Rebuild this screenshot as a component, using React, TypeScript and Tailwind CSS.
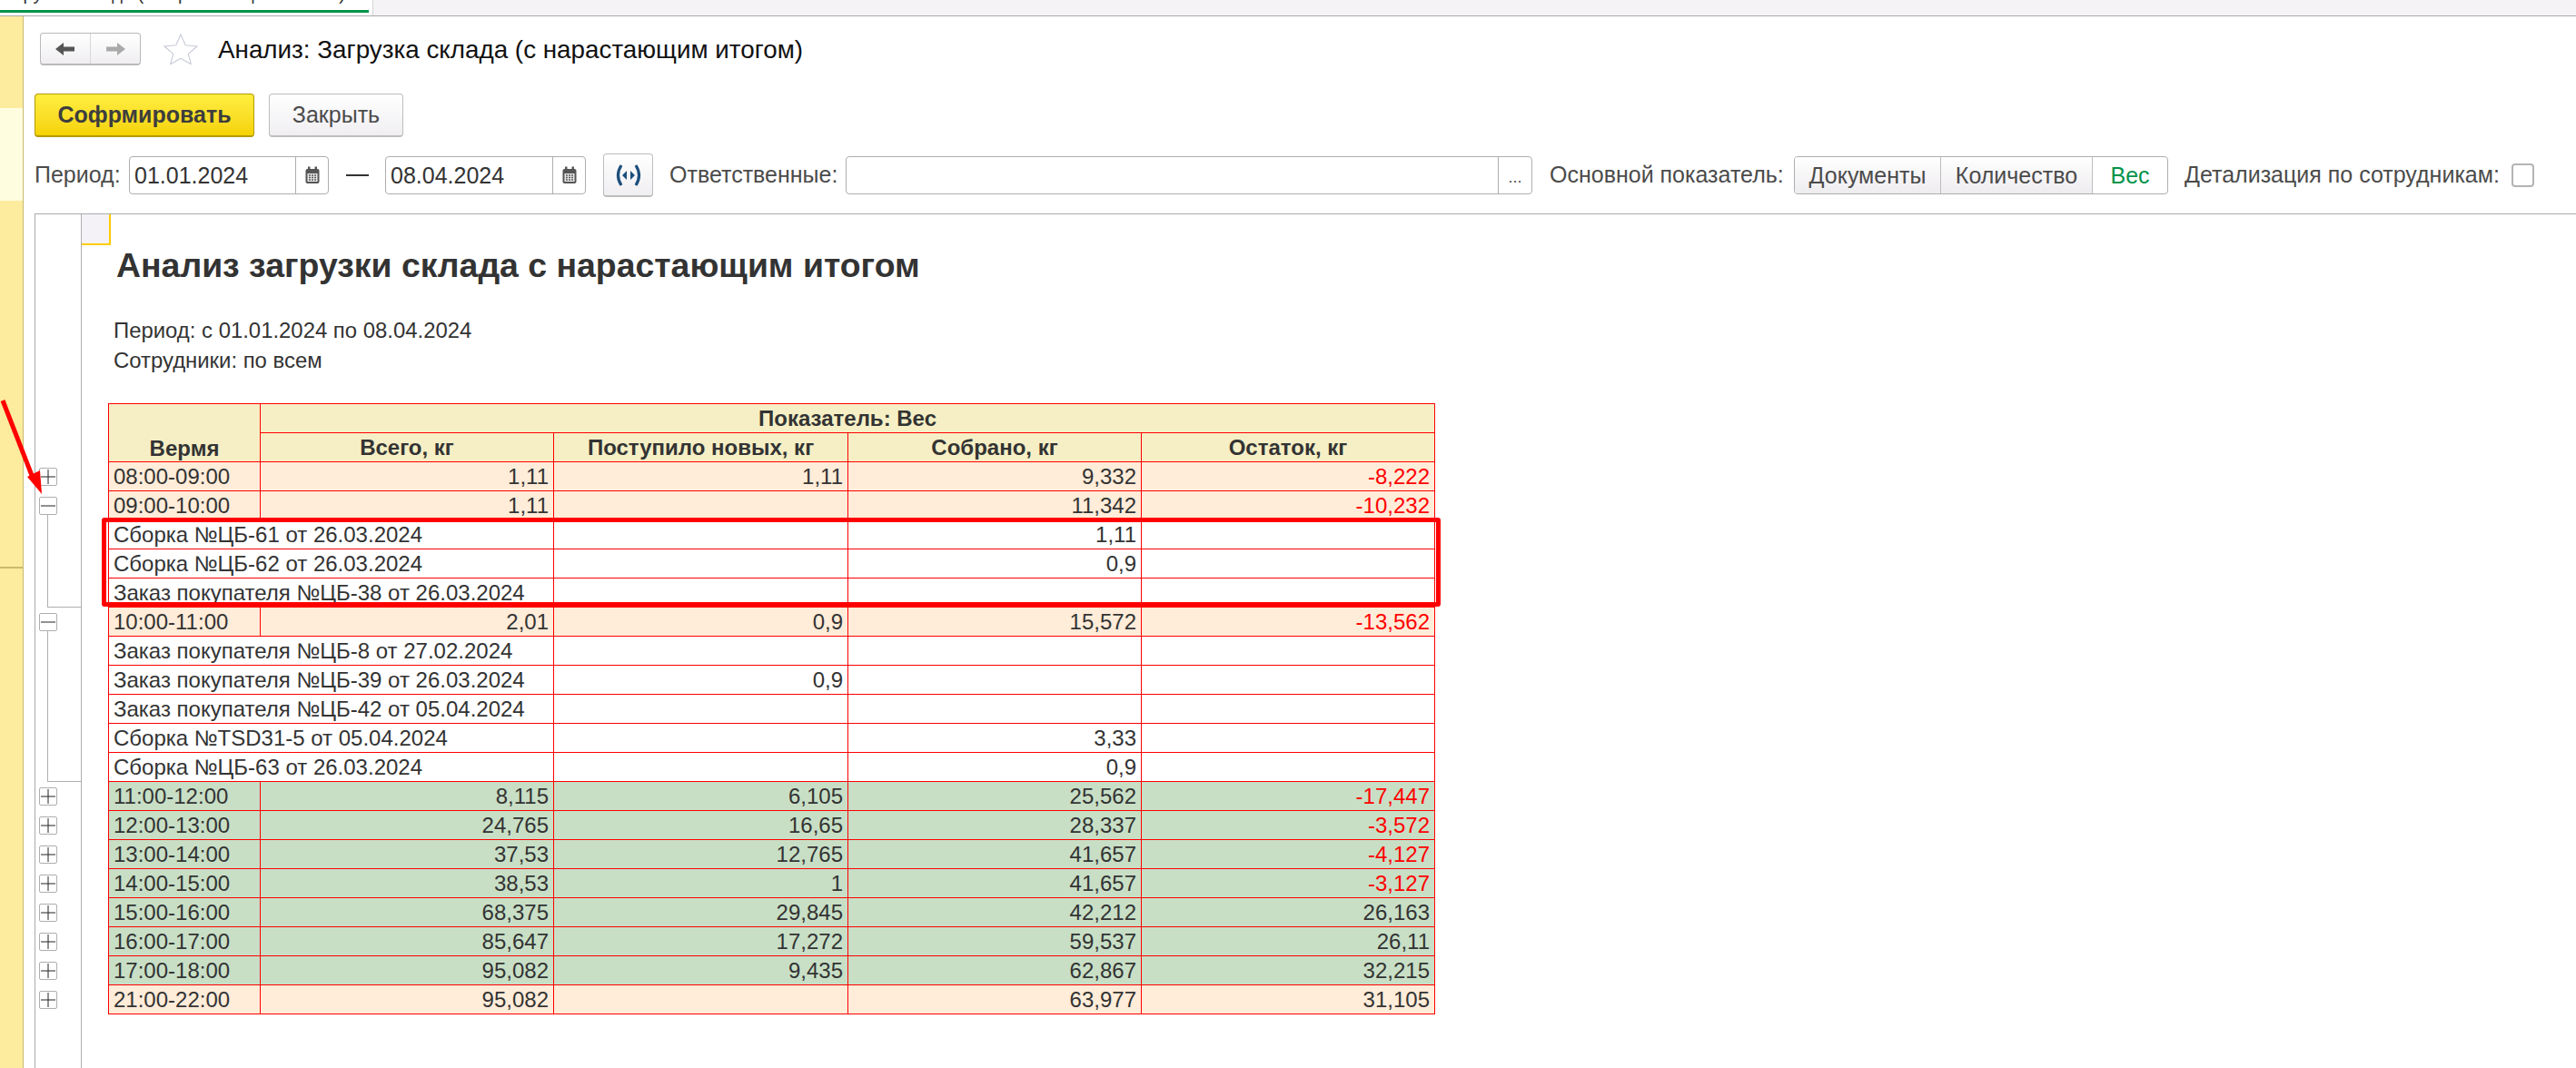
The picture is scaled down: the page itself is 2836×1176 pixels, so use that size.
const font = { fontFamily: '"Liberation Sans", Arial, sans-serif' };

type Row = {
  kind: 'peach' | 'green' | 'detail';
  label: string;
  total?: string;
  added?: string;
  done?: string;
  rest?: string;
};

const rows: Row[] = [
  { kind: 'peach', label: '08:00-09:00', total: '1,11', added: '1,11', done: '9,332', rest: '-8,222' },
  { kind: 'peach', label: '09:00-10:00', total: '1,11', done: '11,342', rest: '-10,232' },
  { kind: 'detail', label: 'Сборка №ЦБ-61 от 26.03.2024', done: '1,11' },
  { kind: 'detail', label: 'Сборка №ЦБ-62 от 26.03.2024', done: '0,9' },
  { kind: 'detail', label: 'Заказ покупателя №ЦБ-38 от 26.03.2024' },
  { kind: 'peach', label: '10:00-11:00', total: '2,01', added: '0,9', done: '15,572', rest: '-13,562' },
  { kind: 'detail', label: 'Заказ покупателя №ЦБ-8 от 27.02.2024' },
  { kind: 'detail', label: 'Заказ покупателя №ЦБ-39 от 26.03.2024', added: '0,9' },
  { kind: 'detail', label: 'Заказ покупателя №ЦБ-42 от 05.04.2024' },
  { kind: 'detail', label: 'Сборка №TSD31-5 от 05.04.2024', done: '3,33' },
  { kind: 'detail', label: 'Сборка №ЦБ-63 от 26.03.2024', done: '0,9' },
  { kind: 'green', label: '11:00-12:00', total: '8,115', added: '6,105', done: '25,562', rest: '-17,447' },
  { kind: 'green', label: '12:00-13:00', total: '24,765', added: '16,65', done: '28,337', rest: '-3,572' },
  { kind: 'green', label: '13:00-14:00', total: '37,53', added: '12,765', done: '41,657', rest: '-4,127' },
  { kind: 'green', label: '14:00-15:00', total: '38,53', added: '1', done: '41,657', rest: '-3,127' },
  { kind: 'green', label: '15:00-16:00', total: '68,375', added: '29,845', done: '42,212', rest: '26,163' },
  { kind: 'green', label: '16:00-17:00', total: '85,647', added: '17,272', done: '59,537', rest: '26,11' },
  { kind: 'green', label: '17:00-18:00', total: '95,082', added: '9,435', done: '62,867', rest: '32,215' },
  { kind: 'peach', label: '21:00-22:00', total: '95,082', done: '63,977', rest: '31,105' },
];

function CalendarIcon() {
  return (
    <svg width="18" height="20" viewBox="0 0 18 20" className="shrink-0">
      <rect x="1.5" y="3" width="15" height="16" rx="2" fill="#555" />
      <rect x="4" y="0.5" width="2.5" height="4" fill="#555" />
      <rect x="11.5" y="0.5" width="2.5" height="4" fill="#555" />
      <rect x="3.5" y="8" width="11" height="9" fill="#e8e8e8" />
      <path d="M5 10h2M8 10h2M11 10h2M5 12.5h2M8 12.5h2M11 12.5h2M5 15h2M8 15h2M11 15h2" stroke="#555" strokeWidth="1.4" />
    </svg>
  );
}

function DateField({ value, width }: { value: string; width: string }) {
  return (
    <div className={`flex h-[42px] ${width} items-stretch rounded-[4px] border border-[#aeaeae] bg-white`}>
      <div className="flex-1 pl-[5px] text-[25px] leading-[40px] text-[#333]">{value}</div>
      <div className="flex w-[36px] items-center justify-center border-l border-[#aeaeae]">
        <CalendarIcon />
      </div>
    </div>
  );
}

function OutlineBox({ open }: { open?: boolean }) {
  return (
    <div className="h-[32px] pl-[4px] pt-[7px]">
      <div className="flex h-[20px] w-[20px] items-center justify-center rounded-[2px] border border-[#aeaeae] bg-white">
        <svg width="18" height="18" viewBox="0 0 18 18">
          <path d="M1 9h16" stroke="#222" strokeWidth="1" />
          {!open && <path d="M9 1v16" stroke="#222" strokeWidth="1" />}
        </svg>
      </div>
    </div>
  );
}

function OutlineBracket({ rows }: { rows: number }) {
  return (
    <div className="flex items-start" style={{ height: rows * 32 }}>
      <div
        className="ml-[13px] -mt-[6px] w-[37px] border-b border-l border-[#aeaeae]"
        style={{ height: rows * 32 + 7 }}
      />
    </div>
  );
}

function ReportTable() {
  const cell = 'border border-[#ff0000] p-0 px-[5px] h-[32px] leading-[28px] overflow-hidden whitespace-nowrap';
  return (
    <div className="relative ml-[29px] mt-[31px] w-[1460px]">
      <table className="w-[1460px] table-fixed border-collapse text-[24px] text-[#333]">
        <colgroup>
          <col className="w-[167px]" />
          <col className="w-[323px]" />
          <col className="w-[324px]" />
          <col className="w-[323px]" />
          <col className="w-[323px]" />
        </colgroup>
        <thead className="bg-[#f6efc5] font-bold">
          <tr>
            <th rowSpan={2} className={`${cell} align-bottom text-center`}>
              Вермя
            </th>
            <th colSpan={4} className={`${cell} text-center`}>
              Показатель: Вес
            </th>
          </tr>
          <tr>
            <th className={`${cell} text-center`}>Всего, кг</th>
            <th className={`${cell} text-center`}>Поступило новых, кг</th>
            <th className={`${cell} text-center`}>Собрано, кг</th>
            <th className={`${cell} text-center`}>Остаток, кг</th>
          </tr>
        </thead>
        <tbody>
          {rows.map((r) => {
            const bg = r.kind === 'peach' ? 'bg-[#ffecd9]' : r.kind === 'green' ? 'bg-[#c8dfc6]' : 'bg-white';
            const negative = r.rest?.startsWith('-');
            return (
              <tr key={r.label} className={bg}>
                {r.kind === 'detail' ? (
                  <td colSpan={2} className={cell}>
                    {r.label}
                  </td>
                ) : (
                  <>
                    <td className={cell}>{r.label}</td>
                    <td className={`${cell} text-right`}>{r.total}</td>
                  </>
                )}
                <td className={`${cell} text-right`}>{r.added}</td>
                <td className={`${cell} text-right`}>{r.done}</td>
                <td className={`${cell} text-right ${negative ? 'text-[#ff0000]' : ''}`}>{r.rest}</td>
              </tr>
            );
          })}
        </tbody>
      </table>
      {/* highlight drawn on top of the screenshot */}
      <div className="absolute left-[-7px] top-[126px] h-[98px] w-[1474px] rounded-[3px] border-[5px] border-[#ff0000]" />
    </div>
  );
}

export default function App() {
  return (
    <div className="relative flex h-[1176px] w-[2836px] flex-col overflow-hidden bg-white" style={font}>
      {/* Tab bar */}
      <div className="flex h-[18px] shrink-0 border-b border-[#aaaaaa] bg-[#f5f3f6]">
        <div className="h-[17px] w-[411px] border-r border-[#d4d4d4] bg-white">
          <div className="h-[11px] overflow-hidden">
            <div className="-mt-[17px] -ml-[5px] whitespace-nowrap text-[20px] leading-[20px] text-[#333]">
              Загрузка склада (с нарастающим итогом)
            </div>
          </div>
          <div className="h-[3px] w-[406px] bg-[#00934a]" />
        </div>
      </div>

      <div className="flex min-h-0 flex-1">
        {/* Left strip */}
        <div className="flex w-[26px] shrink-0 flex-col border-r border-[#c9bb6a]">
          <div className="h-[101px] bg-[#fdeb9e]" />
          <div className="h-[102px] bg-[#fffde0]" />
          <div className="h-[405px] border-b-2 border-[#c9bb6a] bg-[#fdeb9e]" />
          <div className="flex-1 bg-[#fdeb9e]" />
        </div>

        <div className="flex min-w-0 flex-1 flex-col">
          {/* Navigation and title */}
          <div className="ml-[18px] mt-[18px] flex h-[36px] items-center">
            <div className="flex h-[36px] w-[111px] rounded-[4px] border border-b-2 border-[#b9b9b9] bg-gradient-to-b from-white to-[#f0eef1]">
              <div className="flex w-[55px] items-center justify-center border-r border-[#d8d8d8]">
                <svg width="22" height="16" viewBox="0 0 22 16">
                  <path d="M0 8l9-7v4.500h12v5H9V15z" fill="#555" />
                </svg>
              </div>
              <div className="flex flex-1 items-center justify-center">
                <svg width="22" height="16" viewBox="0 0 22 16">
                  <path d="M22 8l-9-7v4.500H1v5h12V15z" fill="#aaa" />
                </svg>
              </div>
            </div>
            <svg width="38" height="34" viewBox="0 0 38 34" className="ml-[25px]">
              <path
                d="M19 1l5.200 11.800 12.800 1.200-9.700 8.400 3 11.300L19 27.200 7.700 33.700l3-11.300L1 14l12.800-1.200z"
                fill="white"
                stroke="#c9cdd8"
                strokeWidth="1.200"
              />
            </svg>
            <div className="ml-[22px] whitespace-nowrap pt-[2px] text-[27.800px] text-[#111]">
              Анализ: Загрузка склада (с нарастающим итогом)
            </div>
          </div>

          {/* Commands */}
          <div className="ml-[12px] mt-[31px] flex h-[48px] gap-[16px]">
            <button className="h-[48px] w-[242px] rounded-[4px] border border-b-2 border-[#b39a00] bg-gradient-to-b from-[#ffee3f] to-[#f5d300] text-[25px] font-bold text-[#3d3d3d]">
              Софрмировать
            </button>
            <button className="h-[48px] w-[148px] rounded-[4px] border border-b-2 border-[#bdbdbd] bg-gradient-to-b from-white to-[#f0eef1] text-[25px] text-[#4b4b4b]">
              Закрыть
            </button>
          </div>

          {/* Filters */}
          <div className="ml-[12px] mt-[18px] flex h-[48px] items-center text-[25px] text-[#4b4b4b]">
            <span className="w-[104px]">Период:</span>
            <DateField value="01.01.2024" width="w-[220px]" />
            <div className="ml-[19px] mr-[18px] h-[2px] w-[25px] bg-[#333]" />
            <DateField value="08.04.2024" width="w-[221px]" />
            <div className="ml-[19px] flex h-[48px] w-[55px] items-center justify-center rounded-[4px] border border-b-2 border-[#bdbdbd] bg-gradient-to-b from-white to-[#f0eef1]">
              <svg width="30" height="26" viewBox="0 0 30 26">
                <path d="M7 2C2.500 9 2.500 17 7 24M23 2c4.500 7 4.500 15 0 22" fill="none" stroke="#1c4f7c" strokeWidth="3.200" />
                <path d="M13 8v10l-5-5zM17 8v10l5-5z" fill="#1c4f7c" />
              </svg>
            </div>
            <span className="ml-[18px] w-[194px] whitespace-nowrap">Ответственные:</span>
            <div className="flex h-[42px] w-[756px] rounded-[4px] border border-[#aeaeae] bg-white">
              <div className="flex-1" />
              <div className="w-[37px] border-l border-[#aeaeae] text-center text-[18px] leading-[44px] text-[#555]">...</div>
            </div>
            <span className="ml-[19px] w-[269px] whitespace-nowrap">Основной показатель:</span>
            <div className="flex h-[42px] w-[412px] overflow-hidden rounded-[4px] border border-[#aeaeae] bg-white">
              <div className="w-[160px] bg-gradient-to-b from-white to-[#eeecef] text-center leading-[40px]">Документы</div>
              <div className="w-[168px] border-x border-[#bdbdbd] bg-gradient-to-b from-white to-[#eeecef] text-center leading-[40px]">Количество</div>
              <div className="flex-1 text-center leading-[40px] text-[#00934a]">Вес</div>
            </div>
            <span className="ml-[18px] whitespace-nowrap">Детализация по сотрудникам:</span>
            <div className="ml-[13px] h-[26px] w-[25px] rounded-[4px] border-2 border-[#b4b4b4] bg-white" />
          </div>

          {/* Report */}
          <div className="ml-[12px] mt-[18px] flex min-h-0 flex-1 border-l border-t border-[#aaaaaa]">
            <div className="w-[51px] shrink-0 border-r border-[#aeaeae] pt-[272px]">
              <OutlineBox />
              <OutlineBox open />
              <OutlineBracket rows={3} />
              <OutlineBox open />
              <OutlineBracket rows={5} />
              {rows.slice(11).map((r) => (
                <OutlineBox key={r.label} />
              ))}
            </div>
            <div className="min-w-0 flex-1">
              <div className="h-[34px] w-[32px] border-b-2 border-r-2 border-[#ffcc00] bg-[#f5f2f7]" />
              <h1 className="ml-[38px] whitespace-nowrap text-[37.400px] font-bold leading-[44px] text-[#333]">
                Анализ загрузки склада с нарастающим итогом
              </h1>
              <div className="ml-[35px] mt-[33px] text-[23.900px] leading-[33px] text-[#333]">
                <div>Период: с 01.01.2024 по 08.04.2024</div>
                <div>Сотрудники: по всем</div>
              </div>
              <ReportTable />
            </div>
          </div>
        </div>
      </div>

      {/* Arrow annotation */}
      <svg width="64" height="110" viewBox="0 0 64 110" className="absolute left-0 top-[438px]">
        <path d="M3 3L36 88" stroke="#ff0000" strokeWidth="5" />
        <path d="M46 106L30 87L44 80z" fill="#ff0000" />
      </svg>
    </div>
  );
}
